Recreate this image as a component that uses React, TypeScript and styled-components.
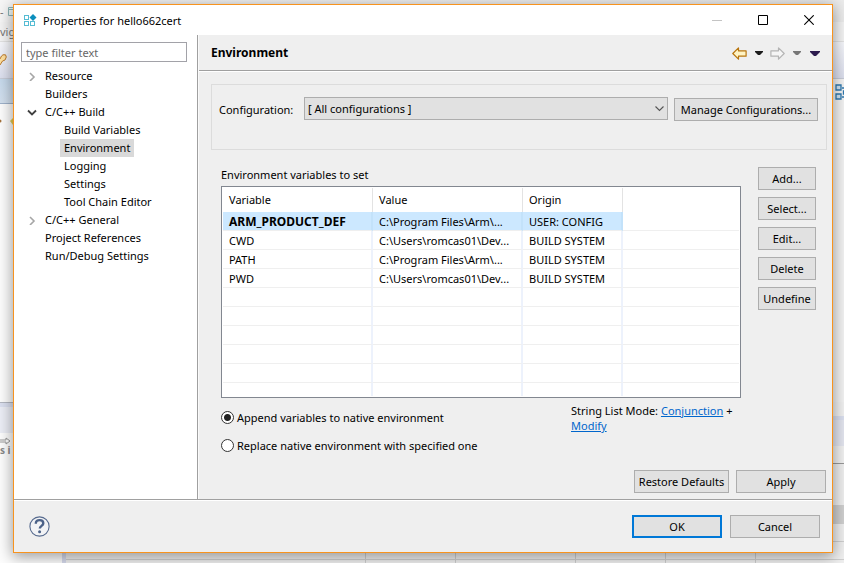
import React, { useState } from "react";
import styled, { createGlobalStyle } from "styled-components";

const GlobalStyle = createGlobalStyle`
  *, *::before, *::after { box-sizing: border-box; }
  body { margin: 0; overflow: hidden; }
  body, button, input, select {
    font-family: "Noto Sans", "Open Sans", sans-serif;
    font-size: 11px;
    line-height: 15px;
    color: #000;
  }
`;

const Screen = styled.div`
  display: grid;
  min-height: 100vh;
  background: #fbfbfb;
`;

/* Workbench behind the dialog */

const Workbench = styled.div`
  grid-area: 1 / 1;
  contain: size;
  display: flex;
  flex-direction: column;
  overflow: hidden;
  color: #777;
  svg { display: block; }
`;

const TitleStrip = styled.div`
  flex: none;
  height: 22px;
  display: flex;
  align-items: center;
  gap: 4px;
  background: linear-gradient(90deg, #f6f6f6, #ececec);
`;

const MenuStrip = styled.div`
  flex: none;
  height: 20px;
  background: #f4f4f4;
  border-bottom: 1px solid #e2e2e2;
  display: flex;
  align-items: center;
`;

const ToolStrip = styled.div`
  flex: none;
  height: 37px;
  display: flex;
  align-items: center;
  background: linear-gradient(#f6f7fb, #dcdfee);
  border-bottom: 1px solid #c8ccd8;
`;

const EditorArea = styled.div`
  flex: none;
  height: 323px;
  display: flex;
  justify-content: space-between;
`;

const EditorLeft = styled.div`
  width: 100px;
  background: #fdfdfd;
`;

const EditorRight = styled.div`
  width: 100px;
  padding: 5px 0 0 91px;
  background: #f4f4f4;
`;

const EditorTab = styled.div`
  height: 25px;
  margin-bottom: 11px;
  background: linear-gradient(#c6d9ec, #d3e0ee);
  border-bottom: 1px solid #9fb2ca;
`;

const Lower = styled.div`
  flex: 1;
  min-height: 0;
  display: flex;
`;

const Console = styled.div`
  flex: none;
  width: 62px;
  border-top: 1px solid #b4b8c2;
  background: #fdfdfd;
`;

const ConsoleTabs = styled.div`
  height: 30px;
  margin-bottom: 4px;
  border-top: 4px solid #dbe0f0;
  background: #eceef6;
`;

const ConsoleMark = styled.div`
  line-height: 10px;
  font-size: 10px;
  font-weight: 700;
  color: #888;
`;

const Sash = styled.div`
  flex: none;
  width: 4px;
  background: #d6daec;
`;

const Properties = styled.div`
  flex: 1;
  min-width: 0;
  padding-top: 14px;
  display: flex;
  flex-direction: column;
  background: #f2f2f2;
`;

const PropertyTabs = styled.div`
  flex: none;
  height: 48px;
  border-top: 4px solid #dbe0f0;
  border-bottom: 1px solid #999;
  background: linear-gradient(#e4e6f0 26px, #f2f2f2 26px);
`;

const PropertyBand = styled.div<{ $height: number; $dark?: boolean }>`
  flex: none;
  height: ${(p) => p.$height}px;
  background: ${(p) => (p.$dark ? "#d0d0d0" : "#f0f0f0")};
  border-bottom: 1px solid #d0d0d0;
  display: flex;
`;

const PropertyCell = styled.div<{ $width: number }>`
  flex: none;
  width: ${(p) => p.$width}px;
  border-right: 1px solid #cfcfcf;
`;

/* Dialog frame */

const Dialog = styled.section`
  grid-area: 1 / 1;
  z-index: 1;
  margin: 4px 11px 10px 13px;
  display: flex;
  flex-direction: column;
  border: 1px solid #f7931e;
  background: #efefef;
  box-shadow: 0 3px 14px 1px rgba(0, 0, 0, 0.38);
`;

const TitleBar = styled.header`
  height: 30px;
  padding-left: 10px;
  display: flex;
  align-items: center;
  gap: 6px;
  background: #fff;
`;

const Title = styled.h1`
  flex: 1;
  margin: 0;
  font-size: 11px;
  font-weight: 400;
`;

const IconButton = styled.button<{ $width: number }>`
  width: ${(p) => p.$width}px;
  height: 24px;
  padding: 0;
  border: 0;
  background: none;
  display: flex;
  align-items: center;
  justify-content: center;
`;

const WindowButtons = styled.div`
  display: flex;
`;

const Body = styled.div`
  flex: 1;
  display: flex;
`;

const Sidebar = styled.nav`
  width: 184px;
  padding: 7px 10px 0 7px;
  background: #fff;
  border-right: 1px solid #a0a0a0;
`;

const Filter = styled.input`
  display: block;
  width: 100%;
  height: 20px;
  margin-bottom: 5px;
  padding: 0 4px;
  border: 1px solid #a2a2a8;
  background: #fff;
  &::placeholder { color: #666; opacity: 1; }
`;

const Tree = styled.ul`
  margin: 0;
  padding: 0;
  list-style: none;
`;

const TreeItem = styled.li<{ $level: number }>`
  height: 18px;
  padding-left: ${(p) => (p.$level === 1 ? 6 : 25)}px;
  display: flex;
  align-items: center;
`;

const Twisty = styled.span`
  width: 14px;
  display: flex;
  align-items: center;
`;

const TreeLabel = styled.a<{ $selected?: boolean }>`
  padding: 0 4px;
  line-height: 18px;
  color: #000;
  text-decoration: none;
  background: ${(p) => (p.$selected ? "#d9d9d9" : "none")};
`;

const Main = styled.main`
  flex: 1;
  display: flex;
  flex-direction: column;
  border-left: 1px solid #fafafa;
`;

const PageHeader = styled.div`
  height: 37px;
  padding: 0 8px 0 12px;
  display: flex;
  align-items: center;
  justify-content: space-between;
  border-bottom: 1px solid #fff;
  box-shadow: inset 0 -1px #a0a0a0;
`;

const PageTitle = styled.h2`
  margin: 0;
  font-size: 12px;
  line-height: 16px;
  font-weight: 700;
`;

const HistoryBar = styled.div`
  display: flex;
  align-items: center;
`;

const Page = styled.div`
  flex: 1;
  padding: 12px 5px 6px 12px;
  display: flex;
  flex-direction: column;
`;

const ConfigGroup = styled.div`
  height: 66px;
  padding: 12px 8px 0 7px;
  display: flex;
  align-items: flex-start;
  border: 1px solid #dcdcdc;
`;

const ConfigLabel = styled.label`
  width: 85px;
  line-height: 26px;
`;

const SelectBox = styled.span`
  flex: 1;
  display: grid;
  align-items: center;
  margin-right: 6px;
  & > * { grid-area: 1 / 1; }
  svg { justify-self: end; margin-right: 4px; pointer-events: none; }
`;

const Select = styled.select`
  appearance: none;
  width: 100%;
  height: 23px;
  padding: 0 3px;
  border: 1px solid #adadad;
  border-radius: 0;
  background: #e1e1e1;
`;

const PushButton = styled.button<{ $width: number; $primary?: boolean; $low?: boolean }>`
  width: ${(p) => p.$width}px;
  height: 23px;
  margin-top: ${(p) => (p.$low ? 1 : 0)}px;
  padding: 0;
  border: ${(p) => (p.$primary ? "2px solid #0078d7" : "1px solid #adadad")};
  background: #e1e1e1;
  white-space: nowrap;
`;

const Variables = styled.div`
  margin-top: 17px;
  padding: 0 11px 0 10px;
  display: flex;
  gap: 17px;
`;

const TableColumn = styled.div`
  flex: 1;
`;

const ButtonColumn = styled.div`
  display: flex;
  flex-direction: column;
  gap: 7px;
`;

const VariableTable = styled.table`
  width: 100%;
  margin-top: 4px;
  table-layout: fixed;
  border-collapse: separate;
  border-spacing: 0;
  border: 1px solid #828790;
  padding: 1px;
  background: #fff;
`;

const Caption = styled.div`
  line-height: 15px;
`;

const HeadCell = styled.th<{ $width?: number }>`
  width: ${(p) => (p.$width ? `${p.$width}px` : "auto")};
  height: 24px;
  padding: 0 6px 2px;
  text-align: left;
  font-weight: 400;
  border-right: ${(p) => (p.$width ? "1px solid #e3e3e3" : "0")};
`;

const Cell = styled.td<{ $selected?: boolean; $bold?: boolean; $last?: boolean; $short?: boolean }>`
  height: ${(p) => (p.$short ? 13 : 19)}px;
  padding: 0 6px;
  overflow: hidden;
  white-space: nowrap;
  line-height: 15px;
  font-size: ${(p) => (p.$bold ? 12 : 11)}px;
  font-weight: ${(p) => (p.$bold ? 700 : 400)};
  background: ${(p) => (p.$selected ? "#cce8ff" : "#fff")};
  border-bottom: ${(p) => (p.$short ? "0" : "1px solid #efefef")};
  border-right: ${(p) => (p.$last ? "0" : p.$selected ? "2px solid #c3e2fa" : "2px solid #edf2fc")};
`;

const Options = styled.div`
  margin-top: 5px;
  display: flex;
  justify-content: space-between;
`;

const RadioLabel = styled.label`
  height: 28px;
  display: flex;
  align-items: center;
  gap: 3px;
`;

const Radio = styled.input`
  appearance: none;
  width: 13px;
  height: 13px;
  margin: 0;
  border: 1px solid #333;
  border-radius: 50%;
  background: #fff;
  &:checked { background: radial-gradient(circle, #222 3px, #fff 4px); }
`;

const ListMode = styled.p`
  width: 170px;
  margin: 0;
`;

const ModeLink = styled.a`
  color: #0066cc;
  text-decoration: underline;
`;

const PageButtons = styled.div`
  margin-top: auto;
  padding-top: 11px;
  padding-right: 1px;
  display: flex;
  justify-content: flex-end;
  gap: 7px;
`;

const Footer = styled.footer`
  height: 53px;
  padding: 0 12px 0 15px;
  display: flex;
  align-items: center;
  gap: 8px;
  border-top: 1px solid #a0a0a0;
  box-shadow: inset 0 1px #fff;
`;

const FooterSpace = styled.div`
  flex: 1;
`;

/* Icons */

const AppIcon = () => (
  <svg width="13" height="13" viewBox="0 0 13 13" fill="none" stroke="#55bcd3">
    <rect x="0.5" y="1.5" width="4" height="4" />
    <rect x="0.5" y="7.5" width="4" height="4" />
    <rect x="6.5" y="7.5" width="4" height="4" />
    <path d="M9 0l3.500 3.500L9 7 5.500 3.500z" fill="#0c8fbd" stroke="none" />
  </svg>
);

const Caret = ({ color, wide }: { color: string; wide?: boolean }) => (
  <svg width={wide ? 10 : 8} height="5" viewBox={wide ? "0 0 10 5" : "0 0 8 5"}>
    <path d={wide ? "M0 0h10v1L6 5H4L0 1z" : "M0 0h8v1L5 4H3L0 1z"} fill={color} />
  </svg>
);

const BackArrow = () => (
  <svg width="15" height="13" viewBox="0 0 15 13">
    <path d="M.8 6.5L6.5.8v3h7.6v5.4H6.5v3z" fill="#fff4c4" stroke="#b8750f" strokeWidth="1.2" strokeLinejoin="round" />
  </svg>
);

const ForwardArrow = () => (
  <svg width="15" height="13" viewBox="0 0 15 13">
    <path d="M14.2 6.5L8.5.8v3H.9v5.4h7.6v3z" fill="#f5f5f5" stroke="#b4b4b4" strokeWidth="1.2" strokeLinejoin="round" />
  </svg>
);

const Chevron = ({ open }: { open?: boolean }) => (
  <svg width="10" height="10" viewBox="0 0 10 10" fill="none" strokeWidth={open ? 1.8 : 1.6} stroke={open ? "#404040" : "#a6a6a6"}>
    <path d={open ? "M1 3.5l4 4 4-4" : "M3 2l4 4-4 4"} />
  </svg>
);

const HelpIcon = () => (
  <svg width="21" height="21" viewBox="0 0 21 21" fill="none">
    <circle cx="10.5" cy="10.5" r="9.6" fill="#f2f3f5" stroke="#566a8e" strokeWidth="1.1" />
    <path d="M6.8 7.7c0-2.4 1.5-3.6 3.8-3.6s3.7 1.2 3.7 3.1c0 2.8-3.5 2.6-3.5 5.4" stroke="#4c6288" strokeWidth="2.4" />
    <circle cx="10.6" cy="15.8" r="1.5" fill="#4c6288" />
  </svg>
);

const tree = [
  { label: "Resource", level: 1, closed: true },
  { label: "Builders", level: 1 },
  { label: "C/C++ Build", level: 1, open: true },
  { label: "Build Variables", level: 2 },
  { label: "Environment", level: 2, selected: true },
  { label: "Logging", level: 2 },
  { label: "Settings", level: 2 },
  { label: "Tool Chain Editor", level: 2 },
  { label: "C/C++ General", level: 1, closed: true },
  { label: "Project References", level: 1 },
  { label: "Run/Debug Settings", level: 1 },
];

const variables = [
  ["ARM_PRODUCT_DEF", "C:\\Program Files\\Arm\\...", "USER: CONFIG"],
  ["CWD", "C:\\Users\\romcas01\\Dev...", "BUILD SYSTEM"],
  ["PATH", "C:\\Program Files\\Arm\\...", "BUILD SYSTEM"],
  ["PWD", "C:\\Users\\romcas01\\Dev...", "BUILD SYSTEM"],
  ...Array.from({ length: 6 }, () => ["", "", ""]),
];

const propertyColumns = [300, 90, 120, 90, 90];

const Background = () => (
  <Workbench aria-hidden="true">
    <TitleStrip>
      <span>-</span>
      <svg width="8" height="9" viewBox="0 0 8 9"><path d="M.5.5h7v8h-7zM.5 2.5h7" fill="#eef6f6" stroke="#8bb4b6" /></svg>
    </TitleStrip>
    <MenuStrip>vig</MenuStrip>
    <ToolStrip>
      <svg width="7" height="12" viewBox="0 0 7 12"><path d="M0 5l1.500-3L3 .8h2.500L6.300 3 5 6 2.500 7 0 11" fill="#ffe1a0" stroke="#bd7b2c" /></svg>
    </ToolStrip>
    <EditorArea>
      <EditorLeft>
        <EditorTab />
        <svg width="14" height="12" viewBox="0 0 14 12"><circle cx="0" cy="6" r="1.500" fill="#a5733c" /><path d="M10 6l3-3h1v7h-1z" fill="#e2cf55" /></svg>
      </EditorLeft>
      <EditorRight>
        <svg width="10" height="17" viewBox="0 0 10 17" fill="#cfe4f4" stroke="#2f79b0" strokeWidth="1.300">
          <path d="M1 1h5v5H1zM1 10h5v5H1zM7 4h3M7 13h3M8.500 7h2v3h-2z" />
        </svg>
      </EditorRight>
    </EditorArea>
    <Lower>
      <Console>
        <ConsoleTabs />
        <svg width="11" height="8" viewBox="0 0 11 8"><path d="M0 3h6V1l4 3-4 3V5H0" fill="#fff" stroke="#999" /></svg>
        <ConsoleMark>s i</ConsoleMark>
      </Console>
      <Sash />
      <Properties>
        <PropertyTabs />
        <PropertyBand $height={42} />
        <PropertyBand $height={18} $dark />
        <PropertyBand $height={18} />
        {[0, 1].map((band) => (
          <PropertyBand key={band} $height={18}>
            {propertyColumns.map((w, i) => <PropertyCell key={i} $width={w} />)}
          </PropertyBand>
        ))}
      </Properties>
    </Lower>
  </Workbench>
);

export default function App() {
  const [mode, setMode] = useState("append");
  return (
    <Screen>
      <GlobalStyle />
      <Background />
      <Dialog role="dialog" aria-labelledby="dialog-title">
        <TitleBar>
          <AppIcon />
          <Title id="dialog-title">Properties for hello662cert</Title>
          <WindowButtons>
            <IconButton $width={46} aria-label="Minimize">
              <svg width="10" height="11" viewBox="0 0 10 11"><path d="M0 5.500h10" stroke="#c4c4c4" /></svg>
            </IconButton>
            <IconButton $width={46} aria-label="Maximize">
              <svg width="10" height="10" viewBox="0 0 10 10"><path d="M.5.5h9v9h-9z" fill="none" stroke="#000" /></svg>
            </IconButton>
            <IconButton $width={46} aria-label="Close">
              <svg width="10" height="10" viewBox="0 0 10 10"><path d="M.3.3l9.400 9.400M9.700.3L.3 9.700" stroke="#000" strokeWidth="1.100" /></svg>
            </IconButton>
          </WindowButtons>
        </TitleBar>
        <Body>
          <Sidebar aria-label="Property pages">
            <Filter type="text" placeholder="type filter text" aria-label="Filter" />
            <Tree>
              {tree.map((n) => (
                <TreeItem key={n.label} $level={n.level}>
                  <Twisty>{(n.open || n.closed) && <Chevron open={n.open} />}</Twisty>
                  <TreeLabel href="#" $selected={n.selected}>{n.label}</TreeLabel>
                </TreeItem>
              ))}
            </Tree>
          </Sidebar>
          <Main>
            <PageHeader>
              <PageTitle>Environment</PageTitle>
              <HistoryBar>
                <IconButton $width={19} aria-label="Back"><BackArrow /></IconButton>
                <IconButton $width={19} aria-label="Back history"><Caret color="#1c1c1c" /></IconButton>
                <IconButton $width={19} aria-label="Forward"><ForwardArrow /></IconButton>
                <IconButton $width={19} aria-label="Forward history"><Caret color="#777" /></IconButton>
                <IconButton $width={18} aria-label="Menu"><Caret color="#2c1a4d" wide /></IconButton>
              </HistoryBar>
            </PageHeader>
            <Page>
              <ConfigGroup>
                <ConfigLabel htmlFor="config">Configuration:</ConfigLabel>
                <SelectBox>
                  <Select id="config"><option>[ All configurations ]</option></Select>
                  <svg width="9" height="6" viewBox="0 0 9 6"><path d="M.5.5l4 4 4-4" fill="none" stroke="#555" strokeWidth="1.100" /></svg>
                </SelectBox>
                <PushButton $width={144} $low>Manage Configurations...</PushButton>
              </ConfigGroup>
              <Variables>
                <TableColumn>
                  <Caption id="vars">Environment variables to set</Caption>
                  <VariableTable aria-labelledby="vars">
                    <thead>
                      <tr>
                        <HeadCell $width={150}>Variable</HeadCell>
                        <HeadCell $width={150}>Value</HeadCell>
                        <HeadCell $width={100}>Origin</HeadCell>
                        <HeadCell as="td" />
                      </tr>
                    </thead>
                    <tbody>
                      {variables.map((row, r) => (
                        <tr key={r}>
                          {row.map((text, c) => (
                            <Cell key={c} $selected={r === 0} $bold={r === 0 && c === 0} $short={r === 9}>{text}</Cell>
                          ))}
                          <Cell $last $short={r === 9} />
                        </tr>
                      ))}
                    </tbody>
                  </VariableTable>
                  <Options>
                    <div>
                      <RadioLabel>
                        <Radio type="radio" name="mode" checked={mode === "append"} onChange={() => setMode("append")} />
                        Append variables to native environment
                      </RadioLabel>
                      <RadioLabel>
                        <Radio type="radio" name="mode" checked={mode === "replace"} onChange={() => setMode("replace")} />
                        Replace native environment with specified one
                      </RadioLabel>
                    </div>
                    <ListMode>
                      String List Mode: <ModeLink href="#">Conjunction</ModeLink> + <ModeLink href="#">Modify</ModeLink>
                    </ListMode>
                  </Options>
                </TableColumn>
                <ButtonColumn>
                  {["Add...", "Select...", "Edit...", "Delete", "Undefine"].map((t) => (
                    <PushButton key={t} $width={58}>{t}</PushButton>
                  ))}
                </ButtonColumn>
              </Variables>
              <PageButtons>
                <PushButton $width={95}>Restore Defaults</PushButton>
                <PushButton $width={90}>Apply</PushButton>
              </PageButtons>
            </Page>
          </Main>
        </Body>
        <Footer>
          <IconButton $width={21} aria-label="Help"><HelpIcon /></IconButton>
          <FooterSpace />
          <PushButton $width={90} $primary>OK</PushButton>
          <PushButton $width={90}>Cancel</PushButton>
        </Footer>
      </Dialog>
    </Screen>
  );
}
